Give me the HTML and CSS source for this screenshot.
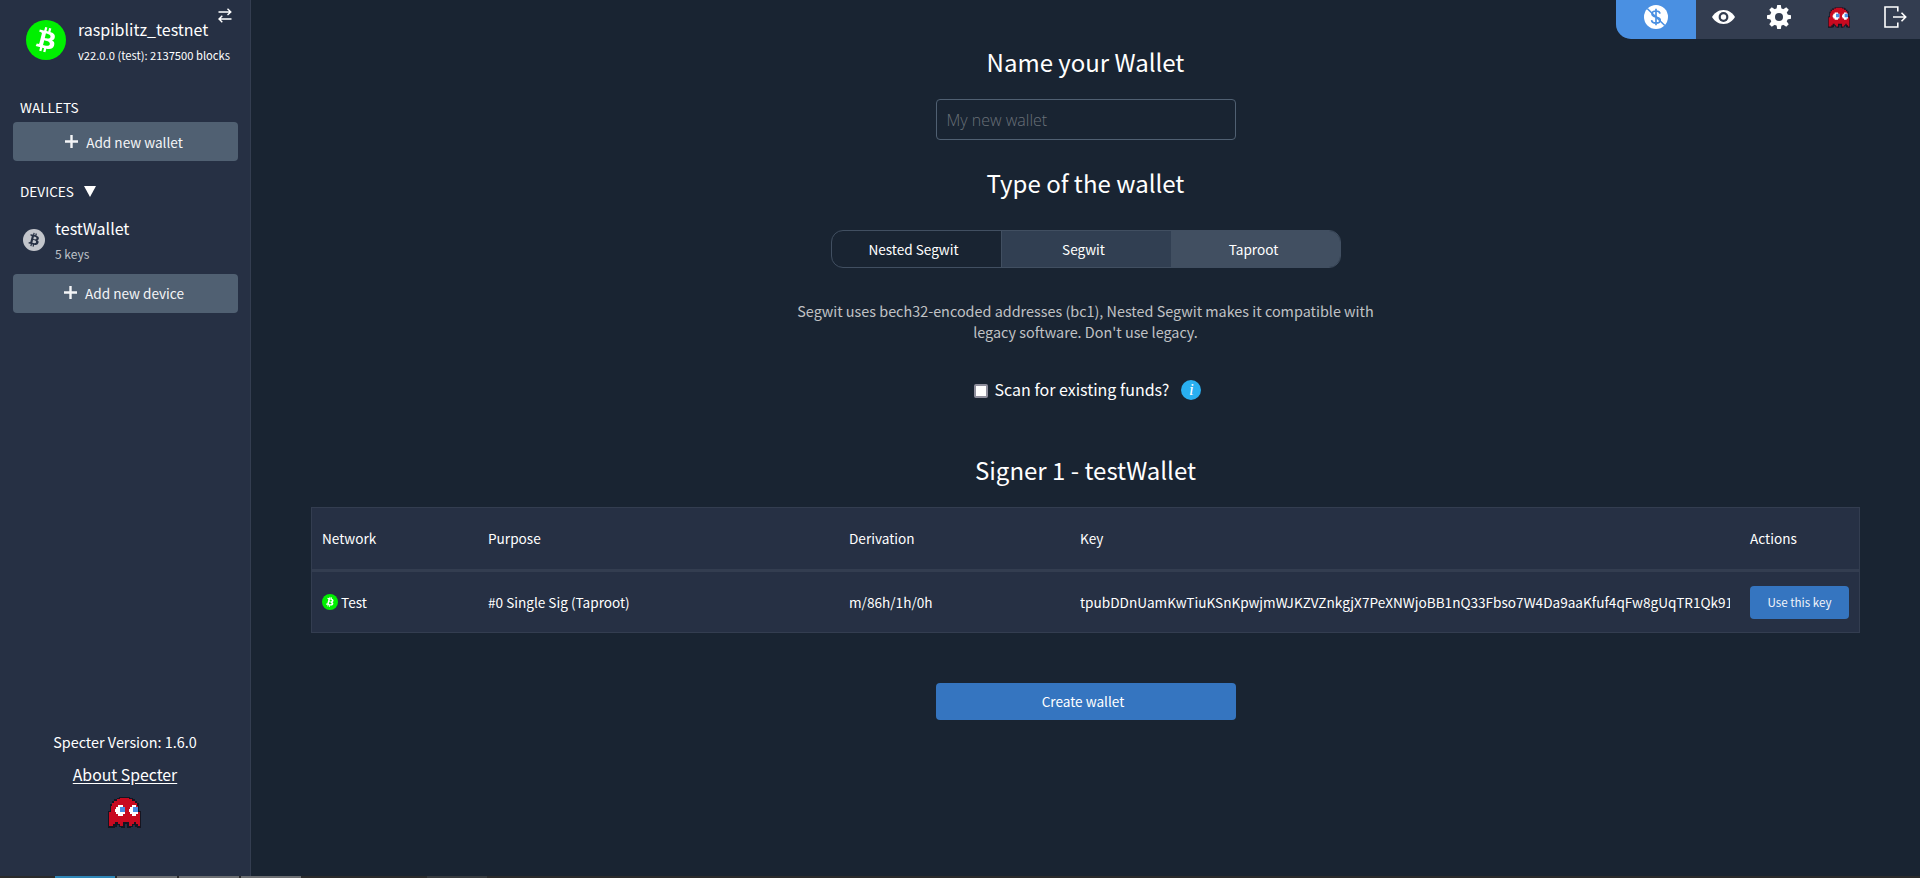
FILE: index.html
```html
<!DOCTYPE html>
<html lang="en">
<head>
<meta charset="utf-8">
<title>Specter - New wallet</title>
<link rel="stylesheet" href="styles.css">
</head>
<body>
<svg class="defs" aria-hidden="true">
  <symbol id="btc" viewBox="0 0 64 64">
    <circle cx="32" cy="32" r="32" fill="currentColor"/>
    <path class="btc-sign" d="M46.1 27.4c.64-4.26-2.6-6.55-7.04-8.07l1.44-5.77-3.51-.88-1.4 5.62c-.93-.23-1.88-.45-2.82-.66l1.41-5.66-3.51-.88-1.44 5.77c-.76-.17-1.52-.35-2.25-.53l-4.84-1.2-.93 3.74s2.6.6 2.55.63c1.42.36 1.68 1.3 1.63 2.04l-3.94 15.82c-.17.43-.61 1.08-1.61.83.04.05-2.55-.64-2.55-.64l-1.74 4.02 4.57 1.14c.85.21 1.68.44 2.5.64l-1.45 5.83 3.5.88 1.44-5.77c.96.26 1.89.5 2.8.73l-1.44 5.74 3.52.88 1.45-5.82c5.99 1.13 10.5.68 12.4-4.74 1.53-4.36-.08-6.88-3.23-8.52 2.3-.53 4.03-2.04 4.49-5.17zm-8.03 11.26c-1.09 4.36-8.43 2-10.81 1.41l1.93-7.73c2.38.6 10.01 1.77 8.88 6.32zm1.08-11.32c-.99 3.97-7.1 1.95-9.08 1.46l1.75-7.01c1.98.49 8.37 1.41 7.33 5.55z"/>
  </symbol>
  <symbol id="ghost" viewBox="0 0 33 31">
    <path fill="#151521" d="M11 0h11v1h3v1h2v2h2v2h2v8h2v17h-4v-1h-2v-2h-2v2h-2v1h-4v-4h-2v4h-4v-1h-2v-2H9v2H7v1H0V14h2V7h2V4h2V2h3V1h2z"/>
    <path fill="#c80a20" d="M12 1h9v1h3v2h3v2h2v3h1v6h2v14h-2v-2h-2v-2h-2v2h-2v2h-3v-4h-6v4h-3v-2h-2v-2H7v2H5v2H1V15h2V9h1V6h2V4h3V2h3z"/>
    <path fill="#fff" d="M10 8h5v2h2v7h-2v2h-5v-2H8v-2H7v-3h1v-2h2zM24 8h4v2h2v7h-2v2h-4v-2h-2v-2h-1v-3h1v-2h2z"/>
    <path fill="#4a8de4" d="M12 10h5v5h-5zM25 10h5v5h-5z"/>
  </symbol>
  <symbol id="plus" viewBox="0 0 13 13"><path d="M5.300 0h2.400v5.300H13v2.400H7.700V13H5.300V7.700H0V5.300h5.300z" fill="currentColor"/></symbol>
</svg>

<aside class="sidebar">
  <header class="node">
    <svg class="node-logo"><use href="#btc"/></svg>
    <div class="node-text">
      <div class="node-name">raspiblitz_testnet</div>
      <div class="node-info">v22.0.0 (test): 2137500 blocks</div>
    </div>
    <svg class="swap" viewBox="0 0 14 15" fill="none" stroke="#fff" stroke-width="1.4"><path d="M.5 4h12M9.500 .8 12.800 4 9.500 7M13.500 11H1.300M4.300 7.800 1 11l3.300 3.200"/></svg>
  </header>
  <h4 class="side-title wallets">WALLETS</h4>
  <a class="side-btn"><svg><use href="#plus"/></svg>Add new wallet</a>
  <h4 class="side-title devices">DEVICES <span class="tri"></span></h4>
  <div class="device">
    <svg class="device-logo"><use href="#btc"/></svg>
    <div>
      <div class="device-name">testWallet</div>
      <div class="device-keys">5 keys</div>
    </div>
  </div>
  <a class="side-btn lower"><svg><use href="#plus"/></svg>Add new device</a>
  <footer class="side-foot">
    <div class="version">Specter Version: 1.6.0</div>
    <a class="about">About Specter</a>
    <svg class="foot-ghost"><use href="#ghost"/></svg>
  </footer>
</aside>

<main class="main">
  <h1 class="title t-name">Name your Wallet</h1>
  <input class="name-input" placeholder="My new wallet">
  <h1 class="title t-type">Type of the wallet</h1>
  <div class="segments">
    <div class="seg seg-nested">Nested Segwit</div>
    <div class="seg seg-segwit">Segwit</div>
    <div class="seg seg-taproot">Taproot</div>
  </div>
  <p class="note">Segwit uses bech32-encoded addresses (bc1), Nested Segwit makes it compatible with<br>legacy software. Don't use legacy.</p>
  <div class="scan"><span class="box"></span><span class="scan-label">Scan for existing funds?</span><span class="info">i</span></div>
  <h1 class="title t-signer">Signer 1 - testWallet</h1>
  <div class="table">
    <div class="row head"><span>Network</span><span>Purpose</span><span>Derivation</span><span>Key</span><span>Actions</span></div>
    <div class="row body">
      <span class="net"><svg><use href="#btc"/></svg>Test</span><span>#0 Single Sig (Taproot)</span><span>m/86h/1h/0h</span>
      <span class="key">tpubDDnUamKwTiuKSnKpwjmWJKZVZnkgjX7PeXNWjoBB1nQ33Fbso7W4Da9aaKfuf4qFw8gUqTR1Qk91</span>
      <a class="use-key">Use this key</a>
    </div>
  </div>
  <a class="create">Create wallet</a>
</main>

<nav class="toolbar">
  <a class="tool active"><svg width="24" height="24" viewBox="0 0 24 24"><circle cx="12" cy="12" r="12" fill="#fff"/><g fill="none" stroke="#4a90e2" stroke-width="1.7"><path d="M16 8.600C15.800 6.900 14.200 6 12 6S8 7 8 8.900c0 4.200 8.200 2 8.200 6.100 0 2-1.800 3.100-4.200 3.100s-4.200-1-4.400-3M12 3.800v16.400"/><path d="M3.200 3.500 20.800 20.500" stroke-width="1.6"/></g></svg></a>
  <a class="tool eye"><svg width="23" height="14" viewBox="0 0 23 14"><path d="M11.500 0C17 0 21 3.500 23 7c-2 3.500-6 7-11.500 7S2 10.500 0 7c2-3.500 6-7 11.500-7z" fill="#fff"/><circle cx="11.500" cy="7" r="4.900" fill="#333d50"/><circle cx="11.500" cy="7" r="2.700" fill="#fff"/></svg></a>
  <a class="tool gear"><svg width="24" height="24" viewBox="-12 -12 24 24"><g fill="#fff"><circle r="9"/><path d="M-2.500-8-1.800-12h3.600l.7 4v16l-.7 4h-3.600l-.7-4z"/><path d="M-2.500-8-1.800-12h3.600l.7 4v16l-.7 4h-3.600l-.7-4z" transform="rotate(45)"/><path d="M-2.500-8-1.800-12h3.600l.7 4v16l-.7 4h-3.600l-.7-4z" transform="rotate(90)"/><path d="M-2.500-8-1.800-12h3.600l.7 4v16l-.7 4h-3.600l-.7-4z" transform="rotate(135)"/></g><circle r="4" fill="#333d50"/></svg></a>
  <a class="tool ghost"><svg width="22" height="21"><use href="#ghost"/></svg></a>
  <a class="tool exit"><svg width="23" height="22" viewBox="0 0 23 22" fill="none" stroke="#fff" stroke-width="1.6"><path d="M13.800 5.500V1H1v20h12.800v-4.500M9 11h12.500M17.500 6.800 21.700 11l-4.200 4.200"/></svg></a>
</nav>
<div class="taskbar"><i class="on"></i><i></i><i></i><i></i><i class="dim"></i></div>
</body>
</html>
```
FILE: styles.css
```css
* { box-sizing: border-box; }
body {
  margin: 0; width: 1920px; height: 878px; overflow: hidden; position: relative;
  display: flex; background: #192432; color: #fff;
  font: 13.6px/20px "Noto Sans CJK SC", "Noto Sans", sans-serif;
}
svg { display: block; flex: none; }
.defs { position: absolute; width: 0; height: 0; }
h1, h4, p { margin: 0; font-weight: 400; }

.sidebar {
  width: 251px; height: 878px; flex: none; background: #263044; border-right: 1px solid #333d50;
  display: flex; flex-direction: column; padding: 0 12px 0 13px;
}
.node { display: flex; height: 98px; padding: 13px 0 0 13px; position: relative; }
.node-logo { width: 40px; height: 40px; margin-top: 7px; color: #00f000; fill: #fff; }
.node-text { padding-left: 12px; white-space: nowrap; }
.node-name { font-size: 16px; line-height: 32px; }
.node-info { font-size: 11.2px; line-height: 20px; }
.swap { position: absolute; left: 205px; top: 8px; width: 14px; height: 15px; }
.side-title { font-size: 13.6px; line-height: 20px; padding-left: 7px; display: flex; align-items: center; gap: 10px; }
.side-title.wallets { height: 24px; padding-bottom: 6px; }
.side-title.devices { height: 20px; margin: 20px 0 16px; }
.tri { border: 6.5px solid transparent; border-top: 11px solid #fff; border-bottom: 0; margin-top: 1px; }
.side-btn {
  height: 39px; background: #506072; border-radius: 4px; color: #f4f5f7; font-size: 13.6px;
  display: flex; align-items: center; justify-content: center; gap: 8px; padding-right: 3px;
}
.side-btn.lower { padding-bottom: 2px; }
.side-btn svg { width: 13px; height: 13px; }
.device { display: flex; height: 57px; padding-left: 10px; }
.device-logo { width: 22px; height: 22px; margin: 12px 10px 0 0; color: #c2c5cb; fill: #263044; }
.device-name { font-size: 16px; line-height: 22px; }
.device-keys { font-size: 12px; line-height: 30px; color: #bfc2c8; }
.side-foot { margin-top: auto; height: 147px; display: flex; flex-direction: column; align-items: center; padding-right: 1px; }
.version { font-size: 14.4px; line-height: 22px; }
.about { font-size: 15.8px; line-height: 24px; margin-top: 10px; text-decoration: underline; text-underline-offset: 2px; }
.foot-ghost { width: 33px; height: 31px; margin: 10px 1px 0 0; }

.main { flex: 1; display: flex; flex-direction: column; align-items: center; }
.title { font-size: 24px; line-height: 36px; }
.t-name { margin-top: 44px; }
.name-input {
  width: 300px; height: 41px; margin-top: 19px; padding: 0 10px; background: transparent; outline: 0;
  border: 1px solid #506072; border-radius: 4px; font: 300 16px "Open Sans", sans-serif; color: #fff;
}
.name-input::placeholder { color: #6a7179; opacity: 1; }
.t-type { margin-top: 25px; }
.segments { display: grid; grid-template-columns: 170px 169px 169px; width: 510px; height: 38px; margin-top: 29px; border: 1px solid #414f61; border-radius: 12px; overflow: hidden; }
.seg { display: flex; align-items: center; justify-content: center; font-size: 13.6px; padding-right: 5px; }
.seg-nested { border-right: 1px solid #414f61; }
.seg-segwit { background: #313f52; }
.seg-taproot { background: #414f61; padding-right: 3px; }
.note { margin-top: 32px; font-size: 14.4px; line-height: 21px; text-align: center; color: #c0c2c5; white-space: nowrap; }
.scan { display: flex; align-items: center; height: 24px; margin: 36px 0 0 4px; }
.box { width: 14px; height: 14px; margin-top: 2px; background: #fff; border: 2px solid #8f8f9d; border-radius: 2px; }
.scan-label { font-size: 16px; line-height: 24px; margin: -2px 12px 0 7px; }
.info { width: 20px; height: 20px; border-radius: 50%; background: #29aff0; font: italic 17px/20px "Liberation Serif", serif; text-align: center; }
.t-signer { margin-top: 50px; }
.table { width: 1549px; margin-top: 19px; background: #263044; border: 1px solid #333d50; }
.row { display: grid; grid-template-columns: 166px 361px 231px 650px 119px; align-items: center; padding-left: 10px; font-size: 13.6px; white-space: nowrap; }
.row > :last-child { margin-left: 20px; }
.head { height: 61px; padding-bottom: 1px; }
.body { height: 63px; border-top: 3px solid #333d50; }
.net { display: flex; align-items: center; gap: 3px; }
.net svg { width: 16px; height: 16px; color: #00f000; fill: #fff; }
.key { overflow: hidden; }
.use-key { width: 99px; height: 33px; background: #3575c0; border-radius: 4px; font-size: 11.6px; line-height: 33px; text-align: center; color: #f0f4fa; }
.create { width: 300px; height: 37px; margin-top: 50px; padding-right: 5px; background: #3575c0; border-radius: 4px; font-size: 13.6px; line-height: 36px; text-align: center; }

.toolbar { position: absolute; right: 0; top: 0; width: 304px; height: 39px; display: flex; background: #333d50; border-bottom-left-radius: 15px; overflow: hidden; }
.tool { display: flex; justify-content: center; align-items: center; height: 34px; width: 56px; }
.active { width: 80px; height: 39px; background: #4a90e2; padding-bottom: 5px; }
.eye { width: 54px; }
.gear { width: 58px; }
.ghost { width: 62px; }
.exit { width: 50px; }
.taskbar { position: absolute; left: 0; right: 0; bottom: 0; height: 2px; background: #2b2b2b; display: flex; gap: 2px; padding-left: 55px; }
.taskbar i { width: 60px; background: #6d6f72; }
.taskbar .on { background: #2f87b8; }
.taskbar .dim { margin-left: 124px; background: #383b3e; }
```
